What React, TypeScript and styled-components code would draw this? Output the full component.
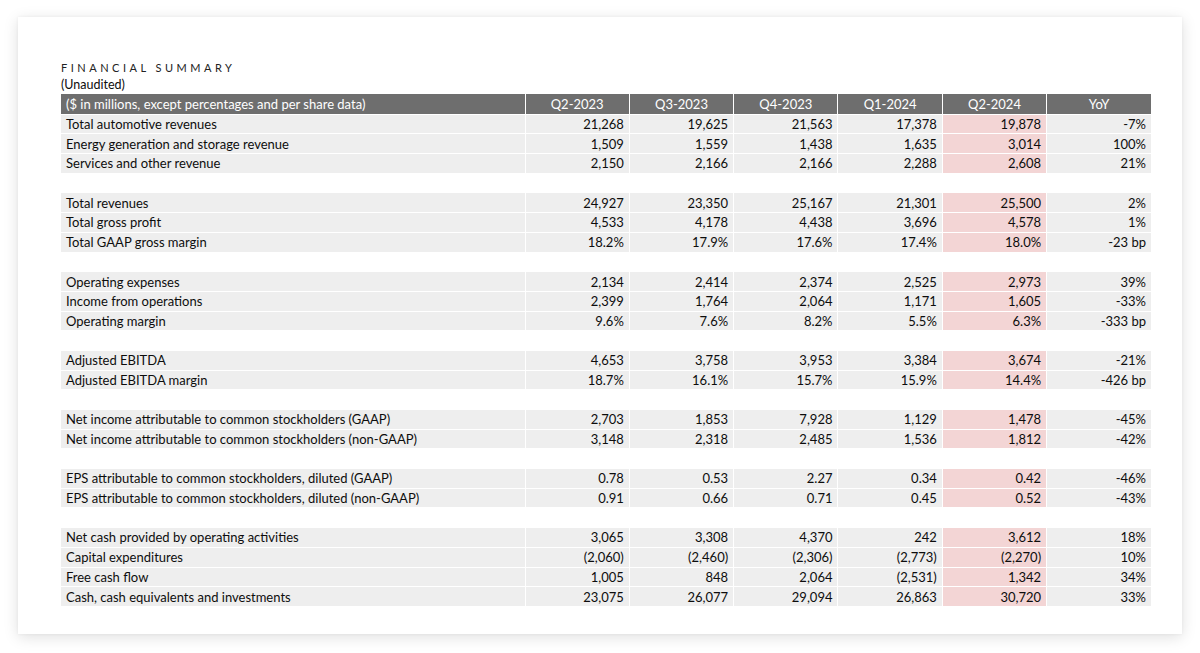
import styled, { createGlobalStyle } from "styled-components";

const GlobalStyle = createGlobalStyle`
  html, body {
    margin: 0;
    padding: 0;
    background: #ffffff;
  }
  body {
    font-family: Lato, "Liberation Sans", sans-serif;
    color: #0d0d0d;
  }
`;

const Page = styled.div`
  padding: 17px 18px 19px;
`;

const Card = styled.div`
  background: #fff;
  height: 617px;
  box-sizing: border-box;
  padding: 44px 43px 0;
  box-shadow: 0 3px 14px rgba(0, 0, 0, 0.13), 0 0 3px rgba(0, 0, 0, 0.05);
`;

const Title = styled.div`
  font-size: 11px;
  letter-spacing: 3.5px;
  color: #222;
  line-height: 14px;
`;

const Subtitle = styled.div`
  font-size: 12.5px;
  line-height: 19px;
`;

const Table = styled.table`
  width: 1090px;
  border-collapse: collapse;
  table-layout: fixed;
  font-size: 13px;
`;

const HeadCell = styled.th<{ $left?: boolean }>`
  background: #6e6e6e;
  color: #fff;
  font-weight: 400;
  height: 19.7px;
  padding: 0 5px;
  text-align: ${(p) => (p.$left ? "left" : "center")};
  border-left: 1px solid #fff;
  &:first-child {
    border-left: 0;
  }
`;

const Row = styled.tr`
  height: 19.7px;
`;

const Cell = styled.td<{ $label?: boolean; $hl?: boolean; $blank?: boolean }>`
  background: ${(p) => (p.$blank ? "#fff" : p.$hl ? "#f3d5d5" : "#eeeeee")};
  padding: 0 5px;
  line-height: 18px;
  white-space: nowrap;
  text-align: ${(p) => (p.$label ? "left" : "right")};
  border-top: 1px solid #fff;
  border-left: 1px solid #fff;
  &:first-child {
    border-left: 0;
  }
`;

const columns = ["Q2-2023", "Q3-2023", "Q4-2023", "Q1-2024", "Q2-2024", "YoY"];

type Line = [string, string[]] | null;

const lines: Line[] = [
  ["Total automotive revenues", ["21,268", "19,625", "21,563", "17,378", "19,878", "-7%"]],
  ["Energy generation and storage revenue", ["1,509", "1,559", "1,438", "1,635", "3,014", "100%"]],
  ["Services and other revenue", ["2,150", "2,166", "2,166", "2,288", "2,608", "21%"]],
  null,
  ["Total revenues", ["24,927", "23,350", "25,167", "21,301", "25,500", "2%"]],
  ["Total gross profit", ["4,533", "4,178", "4,438", "3,696", "4,578", "1%"]],
  ["Total GAAP gross margin", ["18.2%", "17.9%", "17.6%", "17.4%", "18.0%", "-23 bp"]],
  null,
  ["Operating expenses", ["2,134", "2,414", "2,374", "2,525", "2,973", "39%"]],
  ["Income from operations", ["2,399", "1,764", "2,064", "1,171", "1,605", "-33%"]],
  ["Operating margin", ["9.6%", "7.6%", "8.2%", "5.5%", "6.3%", "-333 bp"]],
  null,
  ["Adjusted EBITDA", ["4,653", "3,758", "3,953", "3,384", "3,674", "-21%"]],
  ["Adjusted EBITDA margin", ["18.7%", "16.1%", "15.7%", "15.9%", "14.4%", "-426 bp"]],
  null,
  ["Net income attributable to common stockholders (GAAP)", ["2,703", "1,853", "7,928", "1,129", "1,478", "-45%"]],
  ["Net income attributable to common stockholders (non-GAAP)", ["3,148", "2,318", "2,485", "1,536", "1,812", "-42%"]],
  null,
  ["EPS attributable to common stockholders, diluted (GAAP)", ["0.78", "0.53", "2.27", "0.34", "0.42", "-46%"]],
  ["EPS attributable to common stockholders, diluted (non-GAAP)", ["0.91", "0.66", "0.71", "0.45", "0.52", "-43%"]],
  null,
  ["Net cash provided by operating activities", ["3,065", "3,308", "4,370", "242", "3,612", "18%"]],
  ["Capital expenditures", ["(2,060)", "(2,460)", "(2,306)", "(2,773)", "(2,270)", "10%"]],
  ["Free cash flow", ["1,005", "848", "2,064", "(2,531)", "1,342", "34%"]],
  ["Cash, cash equivalents and investments", ["23,075", "26,077", "29,094", "26,863", "30,720", "33%"]],
];

export default function App() {
  return (
    <Page>
      <GlobalStyle />
      <Card>
        <Title>FINANCIAL SUMMARY</Title>
        <Subtitle>(Unaudited)</Subtitle>
        <Table>
          <colgroup>
            <col style={{ width: 464 }} />
            {columns.map((c) => (
              <col key={c} />
            ))}
          </colgroup>
          <thead>
            <tr>
              <HeadCell $left>($ in millions, except percentages and per share data)</HeadCell>
              {columns.map((c) => (
                <HeadCell key={c}>{c}</HeadCell>
              ))}
            </tr>
          </thead>
          <tbody>
            {lines.map((line, i) =>
              line ? (
                <Row key={i}>
                  <Cell $label>{line[0]}</Cell>
                  {line[1].map((v, j) => (
                    <Cell key={j} $hl={j === 4}>
                      {v}
                    </Cell>
                  ))}
                </Row>
              ) : (
                <Row key={i}>
                  <Cell $blank colSpan={7} />
                </Row>
              )
            )}
          </tbody>
        </Table>
      </Card>
    </Page>
  );
}
